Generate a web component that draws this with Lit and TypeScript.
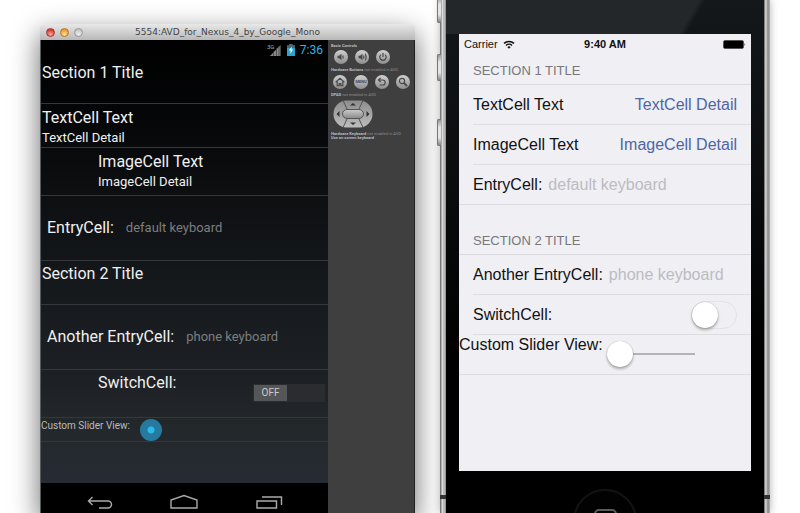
import { LitElement, html, svg, css } from "lit";
import { customElement } from "lit/decorators.js";

@customElement("emulator-panel")
class EmulatorPanel extends LitElement {
  static styles = css`
    :host {
      display: block;
      box-sizing: border-box;
      min-width: 0;
      padding: 4px 3px;
      background: #3f3f3f;
      border-right: 1px solid #222;
      color: #8c8c8c;
      font: 4px/4px Roboto, sans-serif;
    }
    p { margin: 0; white-space: nowrap; }
    b { color: #bbb; }
    .row { display: flex; gap: 7px; padding: 2px 0 4px 3px; }
    .row.wide { padding: 3px 0 4px 2px; }
    button {
      display: block;
      width: 14px;
      height: 14px;
      padding: 0;
      border: 0;
      border-radius: 50%;
      background: linear-gradient(#d0d0d0, #8e8e8e);
      color: #4a4a4a;
      font: bold 4px/14px Roboto, sans-serif;
      flex: none;
    }
    button svg { display: block; }
    .pad { display: block; margin: 3px 0 4px 2px; }
  `;

  private icon(body: unknown) {
    return html`<svg width="14" height="14" viewBox="0 0 14 14" fill="none" stroke="currentColor" stroke-width="1.2" aria-hidden="true">${body}</svg>`;
  }

  render() {
    const speaker = svg`<path d="M3.5 5.8h1.6l2.4-2v6.4l-2.4-2H3.5z" fill="currentColor" stroke="none"/>`;
    return html`
      <p><b>Basic Controls</b></p>
      <div class="row">
        <button aria-label="Volume down">${this.icon(svg`${speaker}<path d="M9 5.6v2.8"/>`)}</button>
        <button aria-label="Volume up">${this.icon(svg`${speaker}<path d="M8.8 5.4v3.2M10.4 3.8q1.6 3.2 0 6.4"/>`)}</button>
        <button aria-label="Power">${this.icon(svg`<path d="M5 4.6a3.2 3.2 0 1 0 4 0M7 3v4"/>`)}</button>
      </div>
      <p><b>Hardware Buttons</b> not enabled in AVD</p>
      <div class="row wide">
        <button aria-label="Home">${this.icon(svg`<path d="M2.6 7.2 7 3.2l4.4 4M4.2 6.6v4h2v-2h1.6v2h2v-4"/>`)}</button>
        <button>MENU</button>
        <button aria-label="Back">${this.icon(svg`<path d="M5.6 3 3.5 5l2.100 2M3.5 5h4.200a2.5 2.5 0 0 1 0 5H4.500"/>`)}</button>
        <button aria-label="Search">${this.icon(svg`<circle cx="6" cy="6" r="2.6"/><path d="m8 8 3 3" stroke-width="1.8"/>`)}</button>
      </div>
      <p><b>DPAD</b> not enabled in AVD</p>
      <svg class="pad" width="40" height="28" viewBox="0 0 40 28" role="img" aria-label="Directional pad">
        <defs>
          <linearGradient id="g" x2="0" y2="1"><stop stop-color="#8d8d8d"/><stop offset="1" stop-color="#bdbdbd"/></linearGradient>
          <linearGradient id="h" x2="0" y2="1"><stop stop-color="#ccc"/><stop offset="1" stop-color="#8a8a8a"/></linearGradient>
        </defs>
        <rect x="0.5" y="0.5" width="39" height="27" rx="13" ry="13.5" fill="url(#g)"/>
        <path d="M10 0.5 14 9M30 0.5 26 9M10 27.5 14 19M30 27.5 26 19" stroke="#555"/>
        <rect x="9.5" y="9.5" width="21" height="9" rx="4.5" fill="url(#h)" stroke="#555"/>
        <path d="M17 5.500 20 3l3 2.500zM17 22.500l3 2.500 3-2.500zM6.500 11v6l-3-3zM33.500 11v6l3-3z" fill="#333"/>
      </svg>
      <p><b>Hardware Keyboard</b> not enabled in AVD</p>
      <p><b>Use on screen keyboard</b></p>
    `;
  }
}

@customElement("android-window")
class AndroidWindow extends LitElement {
  static styles = css`
    :host {
      display: flex;
      flex-direction: column;
      min-width: 0;
      border-radius: 4px 4px 0 0;
      box-shadow: 0 10px 28px rgba(0, 0, 0, 0.6);
      font-family: Roboto, sans-serif;
      color: #f0f0f0;
    }
    .title {
      display: grid;
      grid-template-columns: 60px 1fr 60px;
      align-items: center;
      height: 16px;
      border-radius: 4px 4px 0 0;
      background: linear-gradient(#e8e8e8, #b8b8b8);
      color: #444;
      font: 9px/16px "DejaVu Sans", sans-serif;
      text-align: center;
      white-space: nowrap;
    }
    .name { justify-self: center; }
    .lights { display: flex; gap: 5px; padding-left: 6px; }
    .lights button {
      width: 9px;
      height: 9px;
      padding: 0;
      border: 1px solid #999;
      border-radius: 50%;
      background: radial-gradient(circle at 50% 75%, #eee, #b5b5b5);
    }
    .lights .close { border-color: #a33; background: radial-gradient(circle at 50% 80%, #ffaa98, #d93a30 70%); }
    .lights .min { border-color: #b5762a; background: radial-gradient(circle at 50% 80%, #ffe98a, #f0992c 70%); }
    .body { flex: 1; display: grid; grid-template-columns: minmax(0, 288fr) minmax(0, 87fr); min-height: 0; }
    .screen {
      display: flex;
      flex-direction: column;
      min-width: 0;
      border-left: 1px solid #555a5d;
      box-sizing: border-box;
      background: linear-gradient(#000 0, #060709 18%, #15181b 50%, #1d2125 72%, #23282b 82%, #262b33 92%, #282b36);
    }
    .status {
      display: flex;
      justify-content: flex-end;
      align-items: center;
      gap: 5px;
      height: 20px;
      padding-right: 5px;
      color: #33b5e5;
      font-size: 12px;
    }
    .list { flex: 1; }
    .cell {
      display: flex;
      box-sizing: border-box;
      border-bottom: 1px solid #34383b;
      font-size: 16px;
      line-height: 20px;
      white-space: nowrap;
    }
    h2 { margin: 0; font-weight: 400; }
    .head { height: 44px; padding: 3px 1px 0; }
    .two { flex-direction: column; height: 44px; padding: 4px 1px 0; }
    .image { height: 48px; padding-left: 57px; }
    .detail { font-size: 13px; }
    .entry { height: 65px; align-items: center; gap: 12px; padding: 0 6px; }
    .entry input {
      flex: 1;
      min-width: 0;
      padding: 0;
      border: 0;
      outline: 0;
      background: none;
      color: #eee;
      font: 13px/20px Roboto, sans-serif;
    }
    .entry input::placeholder { color: #7c7e80; opacity: 1; }
    .switch { height: 48px; justify-content: space-between; padding: 3px 3px 0 57px; }
    .toggle { display: grid; grid-template-columns: 35px 37px; align-self: flex-end; margin-bottom: 15px; height: 18px; }
    .toggle input { grid-area: 1 / 1 / 2 / 3; appearance: none; margin: 0; background: #2b2c2d; }
    .toggle span {
      grid-area: 1 / 1;
      z-index: 1;
      margin: 1px;
      background: #555658;
      color: #ccc;
      font-size: 10px;
      line-height: 16px;
      text-align: center;
      pointer-events: none;
    }
    .slider { height: 24px; gap: 10px; font-size: 10px; line-height: 16px; color: #bbb; }
    .slider input { appearance: none; width: 90px; height: 22px; margin: 1px 0 0; background: none; }
    .slider input::-webkit-slider-thumb {
      appearance: none;
      width: 22px;
      height: 22px;
      border-radius: 50%;
      background: radial-gradient(circle, #2fb8ea 0 3px, #26799f 4px);
    }
    nav {
      display: grid;
      grid-template-columns: repeat(3, 1fr);
      justify-items: center;
      padding: 10px 17px 2px;
      background: #000;
    }
    nav button { display: block; padding: 0; border: 0; background: none; height: 18px; }
    nav svg { display: block; }
  `;

  private nav(label: string, d: string) {
    return html`<button aria-label=${label}>
      <svg width="28" height="18" viewBox="0 0 28 18" fill="none" stroke="#aaa" stroke-width="1.4" aria-hidden="true"><path d=${d}/></svg>
    </button>`;
  }

  render() {
    return html`
      <header class="title">
        <div class="lights">
          <button class="close" aria-label="Close"></button>
          <button class="min" aria-label="Minimize"></button>
          <button aria-label="Zoom"></button>
        </div>
        <span class="name">5554:AVD_for_Nexus_4_by_Google_Mono</span>
      </header>
      <div class="body">
        <div class="screen">
          <div class="status">
            <svg width="15" height="14" viewBox="0 0 15 14" aria-hidden="true">
              <text x="0" y="6" font-size="6" fill="#aaa">3G</text>
              <path d="M13.5 2v11H3z" fill="#8a8a8a"/>
              <path d="M6.5 8v5M9.5 5v8M12 3v10" stroke="#333" stroke-width="0.7"/>
            </svg>
            <svg width="8" height="12" viewBox="0 0 8 12" aria-hidden="true">
              <path d="M2.5 0h3v1.5H8V12H0V1.5h2.500z" fill="#2aa3d0"/>
              <path d="M2.5 0h3v1.5H8V4H0V1.5h2.500z" fill="#4c6470"/>
              <path d="M4.8 2.500 2 6.500h1.800L3.200 10 6 5.600H4.400z" fill="#fff"/>
            </svg>
            <span>7:36</span>
          </div>
          <div class="list">
            <h2 class="cell head">Section 1 Title</h2>
            <div class="cell two"><span>TextCell Text</span><span class="detail">TextCell Detail</span></div>
            <div class="cell two image"><span>ImageCell Text</span><span class="detail">ImageCell Detail</span></div>
            <div class="cell entry"><label for="e1">EntryCell:</label><input id="e1" placeholder="default keyboard" /></div>
            <h2 class="cell head">Section 2 Title</h2>
            <div class="cell entry"><label for="e2">Another EntryCell:</label><input id="e2" type="tel" placeholder="phone keyboard" /></div>
            <div class="cell switch">
              <label for="sw">SwitchCell:</label>
              <div class="toggle"><input id="sw" type="checkbox" /><span>OFF</span></div>
            </div>
            <div class="cell slider"><label for="sl">Custom Slider View:</label><input id="sl" type="range" value="0" /></div>
          </div>
          <nav>
            ${this.nav("Back", "M6.500 4 2.500 8l4 4M2.500 8H22a3.500 3.500 0 0 1 0 7H13")}
            ${this.nav("Home", "M1 15V7L14 2.500 27 7v8z")}
            ${this.nav("Recent apps", "M2 8h19.500v7H2zM7 4h19.500V12")}
          </nav>
        </div>
        <emulator-panel></emulator-panel>
      </div>
    `;
  }
}

@customElement("ios-phone")
class IosPhone extends LitElement {
  static styles = css`
    :host {
      position: relative;
      display: flex;
      flex-direction: column;
      box-sizing: border-box;
      min-width: 0;
      padding: 0 19px;
      background:
        linear-gradient(90deg, #777 1px, #ddd 2px 3px, #999 4px, #d8d8d8 5px, #555 6px, transparent 6px),
        linear-gradient(270deg, #aaa 1px, #777 2px, #bbb 3px, #ccc 5px, #333 6px, transparent 6px),
        linear-gradient(120deg, #23272a 74%, transparent 76%) top / 100% 34px no-repeat,
        linear-gradient(#14181b, #0c0e10 30%, #000 70%);
      box-shadow: 0 0 8px rgba(0, 0, 0, 0.3);
      font-family: "Liberation Sans", Arial, sans-serif;
      color: #111;
    }
    .key {
      position: absolute;
      left: -3px;
      top: 54px;
      box-sizing: border-box;
      width: 4px;
      height: 27px;
      border: 1px solid #777;
      border-right: 0;
      border-radius: 2px 0 0 2px;
      background: linear-gradient(#999, #e5e5e5 30% 70%, #888);
    }
    .mute { top: -4px; }
    .down { top: 119px; }
    .seam {
      position: absolute;
      left: 0;
      right: 0;
      bottom: 14px;
      height: 4px;
      background: linear-gradient(90deg, #333 6px, transparent 6px calc(100% - 6px), #333 calc(100% - 6px));
    }
    .screen { margin-top: 34px; flex: 1; background: #efeff4; }
    .status {
      display: grid;
      grid-template-columns: 1fr auto 1fr;
      align-items: center;
      height: 20px;
      padding: 0 5px;
      font-size: 11px;
    }
    .carrier { display: flex; align-items: center; gap: 5px; }
    .battery { justify-self: end; }
    h2 {
      display: flex;
      align-items: flex-end;
      box-sizing: border-box;
      height: 50px;
      margin: 0;
      padding: 0 14px 5px;
      border-bottom: 1px solid #d9d9de;
      color: #77777b;
      font-size: 13px;
      line-height: 16px;
      font-weight: 400;
    }
    .first { height: 31px; }
    .group { padding-left: 14px; border-bottom: 1px solid #d9d9de; }
    .group.open { border-bottom: 0; }
    .cell {
      display: flex;
      align-items: center;
      gap: 6px;
      box-sizing: border-box;
      height: 40px;
      padding-right: 14px;
      border-bottom: 1px solid #dcdce1;
      font-size: 16px;
      line-height: 20px;
      white-space: nowrap;
    }
    .cell.last { height: 39px; border-bottom: 0; }
    .detail { margin-left: auto; color: #4f66a3; }
    .cell input[type="text"], .cell input[type="tel"] {
      flex: 1;
      min-width: 0;
      padding: 0;
      border: 0;
      outline: 0;
      background: none;
      font: 16px/20px "Liberation Sans", Arial, sans-serif;
    }
    .cell input::placeholder { color: #bcbcc2; opacity: 1; }
    .switch {
      appearance: none;
      box-sizing: border-box;
      width: 46px;
      height: 28px;
      margin: 0 0 0 auto;
      border: 1px solid #e3e3e6;
      border-radius: 14px;
    }
    .switch::before {
      content: "";
      display: block;
      width: 26px;
      height: 26px;
      border-radius: 50%;
      background: #fff;
      box-shadow: 0 2px 3px rgba(0, 0, 0, 0.3), 0 0 1px rgba(0, 0, 0, 0.3);
    }
    .slider { align-items: flex-start; gap: 4px; padding-right: 0; }
    .slider input {
      appearance: none;
      width: 88px;
      height: 26px;
      margin: 6px 0 0;
      background: linear-gradient(#b4b4b8, #b4b4b8) center / 100% 2px no-repeat;
    }
    .slider input::-webkit-slider-thumb {
      appearance: none;
      width: 26px;
      height: 26px;
      border-radius: 50%;
      background: #fff;
      box-shadow: 0 2px 3px rgba(0, 0, 0, 0.3), 0 0 1px rgba(0, 0, 0, 0.3);
    }
    .chin { display: flex; justify-content: center; height: 42px; padding-top: 18px; box-sizing: border-box; overflow: hidden; }
    .home {
      flex: none;
      display: flex;
      justify-content: center;
      align-items: flex-start;
      width: 64px;
      height: 64px;
      padding: 18px 0 0;
      border: 2px solid #111315;
      border-radius: 50%;
      background: #020202;
    }
    .home span { box-sizing: border-box; width: 23px; height: 23px; border: 2px solid #5c5c5e; border-radius: 5px; }
  `;

  render() {
    return html`
      <i class="key mute"></i><i class="key"></i><i class="key down"></i>
      <i class="seam"></i>
      <div class="screen">
        <div class="status">
          <span class="carrier">Carrier
            <svg width="12" height="9" viewBox="0 0 12 9" fill="none" stroke="#111" stroke-width="1.5" aria-hidden="true">
              <path d="M1 3.4a7.200 7.200 0 0 1 10 0M3 5.500a4.300 4.300 0 0 1 6 0"/>
              <path d="M6 8.800 4.300 7a2.400 2.400 0 0 1 3.400 0z" fill="#111" stroke="none"/>
            </svg>
          </span>
          <b>9:40 AM</b>
          <svg class="battery" width="23" height="9" viewBox="0 0 23 9" aria-hidden="true">
            <rect x="0.5" y="0.5" width="20" height="8" rx="1.5" fill="none" stroke="#555"/>
            <rect x="1" y="1" width="19" height="7" fill="#000"/>
            <path d="M21.500 3v3q1.500-1.500 0-3z" fill="#333"/>
          </svg>
        </div>
        <h2 class="first">SECTION 1 TITLE</h2>
        <div class="group">
          <div class="cell"><span>TextCell Text</span><span class="detail">TextCell Detail</span></div>
          <div class="cell"><span>ImageCell Text</span><span class="detail">ImageCell Detail</span></div>
          <div class="cell last"><label for="e1">EntryCell:</label><input id="e1" type="text" placeholder="default keyboard" /></div>
        </div>
        <h2>SECTION 2 TITLE</h2>
        <div class="group open">
          <div class="cell"><label for="e2">Another EntryCell:</label><input id="e2" type="tel" placeholder="phone keyboard" /></div>
          <div class="cell"><label for="sw">SwitchCell:</label><input id="sw" class="switch" type="checkbox" /></div>
        </div>
        <div class="cell slider"><label for="sl">Custom Slider View:</label><input id="sl" type="range" value="0" /></div>
      </div>
      <div class="chin"><button class="home" aria-label="Home"><span></span></button></div>
    `;
  }
}

@customElement("app-root")
class AppRoot extends LitElement {
  static styles = css`
    :host {
      display: grid;
      grid-template-columns: minmax(0, 375fr) minmax(0, 330fr);
      gap: 25px;
      box-sizing: border-box;
      height: 100vh;
      min-height: 513px;
      padding: 0 30px 0 40px;
      overflow: hidden;
      background: #fff;
    }
    android-window { margin-top: 24px; }
  `;

  render() {
    return html`<android-window></android-window><ios-phone></ios-phone>`;
  }
}
